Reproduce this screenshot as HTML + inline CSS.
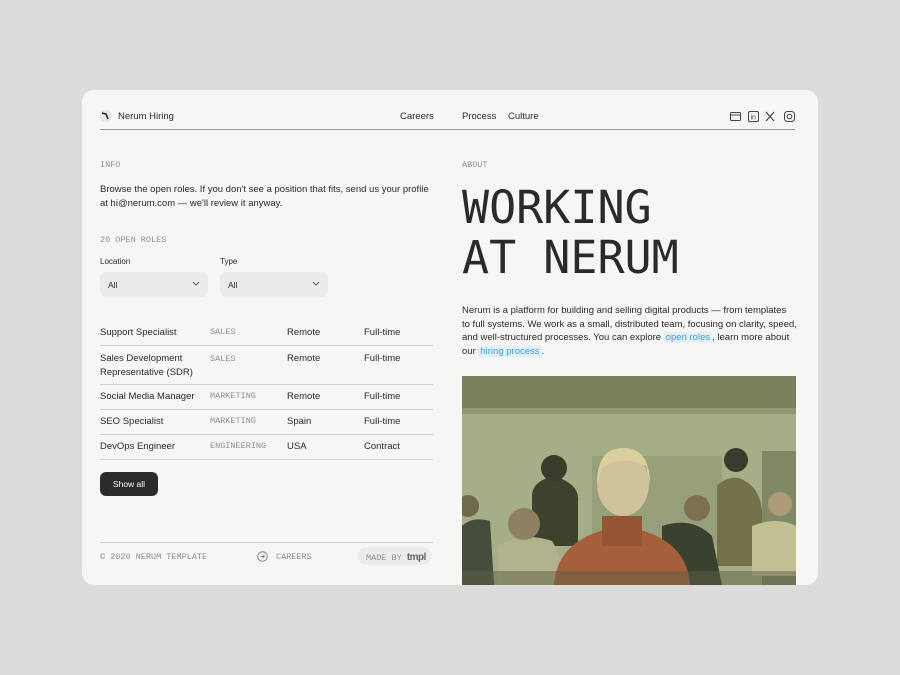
<!DOCTYPE html>
<html><head><meta charset="utf-8"><style>
*{margin:0;padding:0;box-sizing:border-box}
body{width:900px;height:675px;background:#dcdcdb;font-family:"Liberation Sans",sans-serif;color:#2a2a2a;position:relative;overflow:hidden}
.card{position:absolute;left:82px;top:90px;width:736px;height:495px;background:#f6f6f4;border-radius:12px;overflow:hidden}
.a{position:absolute;white-space:nowrap}
.mono{font-family:"DejaVu Sans Mono",monospace}
.s{font-size:9.5px}
.lbl{font-family:"Liberation Mono",monospace;font-size:8.5px;color:#8f8f8f;letter-spacing:0}
.line{position:absolute;height:1px;background:#cfcfcd}
.sel{position:absolute;width:108px;height:25px;background:#ebebea;border-radius:6px;font-size:8.5px;padding:8px 0 0 8px}
.sel svg{position:absolute;right:8px;top:9px}
.row{position:absolute;left:18px;width:333px;font-size:9.5px}
.row span{position:absolute;white-space:nowrap}
.hl{background:#e3f0f8;color:#3a9ee0;padding:0 2px;border-radius:2px}
</style></head><body>
<div class="card">
 <svg class="a" style="left:18px;top:20px" width="12" height="12"><circle cx="6" cy="6" r="6" fill="#e6e6e4"/><path d="M2 3 L6 4 L8 9" stroke="#222" stroke-width="1.6" fill="none"/></svg>
 <div class="a s" style="left:36px;top:21px">Nerum Hiring</div>
 <div class="a s" style="left:318px;top:21px">Careers</div>
 <div class="a s" style="left:380px;top:21px">Process</div>
 <div class="a s" style="left:426px;top:21px">Culture</div>
 <svg class="a" style="left:648px;top:21px" width="66" height="11" fill="none" stroke="#444" stroke-width="1">
  <rect x="0.5" y="1.5" width="10" height="8" rx="1"/><line x1="0.5" y1="4" x2="10.5" y2="4"/>
  <rect x="18.5" y="0.5" width="10" height="10" rx="1.5"/><text x="20.5" y="8.5" font-size="7" fill="#444" stroke="none" font-family="Liberation Sans">in</text>
  <path d="M36 1 L44 10 M44 1 L36 10" stroke-width="1.2"/>
  <rect x="54.5" y="0.5" width="10" height="10" rx="3"/><circle cx="59.5" cy="5.5" r="2.3"/>
 </svg>
 <div class="line" style="left:18px;top:39px;width:695px;background:#9a9a98"></div>

 <div class="a lbl" style="left:18px;top:70px">INFO</div>
 <div class="a s" style="left:18px;top:93px;line-height:14px">Browse the open roles. If you don't see a position that fits, send us your profile<br>at hi@nerum.com — we'll review it anyway.</div>
 <div class="a lbl" style="left:18px;top:145px">20 OPEN ROLES</div>
 <div class="a" style="left:18px;top:167px;font-size:8px">Location</div>
 <div class="a" style="left:138px;top:167px;font-size:8px">Type</div>
 <div class="sel" style="left:18px;top:182px">All<svg width="8" height="6"><path d="M1 1l3 3 3-3" stroke="#666" fill="none"/></svg></div>
 <div class="sel" style="left:138px;top:182px">All<svg width="8" height="6"><path d="M1 1l3 3 3-3" stroke="#666" fill="none"/></svg></div>

 <div class="row" style="top:237px"><span style="left:0">Support Specialist</span><span class="lbl" style="left:110px;top:0">SALES</span><span style="left:187px">Remote</span><span style="left:264px">Full-time</span></div>
 <div class="line" style="left:18px;top:255px;width:333px"></div>
 <div class="row" style="top:262px;line-height:14px"><span style="left:0">Sales Development<br>Representative (SDR)</span><span class="lbl" style="left:110px;top:0">SALES</span><span style="left:187px">Remote</span><span style="left:264px">Full-time</span></div>
 <div class="line" style="left:18px;top:294px;width:333px"></div>
 <div class="row" style="top:301px"><span style="left:0">Social Media Manager</span><span class="lbl" style="left:110px;top:0">MARKETING</span><span style="left:187px">Remote</span><span style="left:264px">Full-time</span></div>
 <div class="line" style="left:18px;top:319px;width:333px"></div>
 <div class="row" style="top:326px"><span style="left:0">SEO Specialist</span><span class="lbl" style="left:110px;top:0">MARKETING</span><span style="left:187px">Spain</span><span style="left:264px">Full-time</span></div>
 <div class="line" style="left:18px;top:344px;width:333px"></div>
 <div class="row" style="top:351px"><span style="left:0">DevOps Engineer</span><span class="lbl" style="left:110px;top:0">ENGINEERING</span><span style="left:187px">USA</span><span style="left:264px">Contract</span></div>
 <div class="line" style="left:18px;top:369px;width:333px"></div>
 <div class="a" style="left:18px;top:382px;width:58px;height:24px;background:#2b2b2b;border-radius:6px;color:#fff;font-size:8.5px;text-align:center;line-height:24px">Show all</div>

 <div class="line" style="left:18px;top:452px;width:333px"></div>
 <div class="a lbl" style="left:18px;top:462px">© 2026 NERUM TEMPLATE</div>
 <svg class="a" style="left:175px;top:461px" width="11" height="11"><circle cx="5.5" cy="5.5" r="4.8" stroke="#888" fill="none"/><path d="M3.5 5.5h4M6 4l1.5 1.5L6 7" stroke="#888" fill="none"/></svg>
 <div class="a lbl" style="left:194px;top:462px">CAREERS</div>
 <div class="a" style="left:276px;top:457px;width:74px;height:18px;background:#ececea;border-radius:9px"></div>
 <div class="a lbl" style="left:284px;top:462px">MADE BY <b style="font-family:'Liberation Sans';color:#666;font-size:10px;letter-spacing:-.5px">tmpl</b></div>

 <div class="a lbl" style="left:380px;top:70px">ABOUT</div>
 <div class="a mono" style="left:380px;top:93px;font-size:45px;line-height:50px;color:#2a2a2a">WORKING<br>AT NERUM</div>
 <div class="a s" style="left:380px;top:214px;line-height:13.6px">Nerum is a platform for building and selling digital products — from templates<br>to full systems. We work as a small, distributed team, focusing on clarity, speed,<br>and well-structured processes. You can explore <span class="hl">open roles</span>, learn more about<br>our <span class="hl">hiring process</span>.</div>

 <svg class="a" style="left:380px;top:286px" width="334" height="209" viewBox="0 0 334 209">
  <rect width="334" height="209" fill="#a8b089"/>
  <rect width="334" height="32" fill="#767b58"/>
  <rect x="0" y="32" width="334" height="6" fill="#8f9670"/>
  <rect x="300" y="75" width="34" height="134" fill="#7e8563"/>
  <rect x="130" y="80" width="130" height="90" fill="#98a07c"/>
  <path d="M70 120 Q70 105 92 100 Q118 108 116 125 L116 170 L70 170Z" fill="#2f3524"/>
  <circle cx="92" cy="92" r="13" fill="#2a2e20"/>
  <path d="M255 110 Q265 100 277 102 Q298 110 300 135 L300 190 L255 190Z" fill="#6d6a42"/>
  <circle cx="274" cy="84" r="12" fill="#2a2e20"/>
  <path d="M0 150 Q10 140 28 145 L32 209 L0 209Z" fill="#3a4030"/>
  <circle cx="6" cy="130" r="11" fill="#6b6148"/>
  <path d="M200 150 Q230 140 250 160 L260 209 L200 209Z" fill="#2d3424"/>
  <circle cx="235" cy="132" r="13" fill="#7a6a4e"/>
  <path d="M290 150 Q315 140 334 150 L334 200 L290 200Z" fill="#c9c497"/>
  <circle cx="318" cy="128" r="12" fill="#b09a78"/>
  <path d="M36 170 Q60 155 90 165 Q100 180 100 209 L36 209Z" fill="#b6b690"/>
  <circle cx="62" cy="148" r="16" fill="#8e7a5e"/>
  <path d="M92 209 Q95 160 160 150 Q225 160 228 209Z" fill="#a85634"/>
  <rect x="140" y="140" width="40" height="30" fill="#964a2c"/>
  <ellipse cx="161" cy="108" rx="26" ry="32" fill="#d8c8a0"/>
  <path d="M135 108 Q135 72 161 72 Q188 72 188 108 L184 90 Q161 78 140 92Z" fill="#e3d7a2"/>
  <rect x="0" y="195" width="334" height="14" fill="#55563d" opacity=".5"/>
  <rect width="334" height="209" fill="#9aa878" opacity=".12"/>
 </svg>
</div>
</body></html>
